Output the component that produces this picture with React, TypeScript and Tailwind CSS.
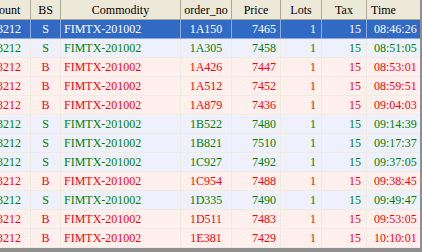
import React from 'react';

type Trade = {
  account: string;
  bs: 'B' | 'S';
  commodity: string;
  orderNo: string;
  price: number;
  lots: number;
  tax: number;
  time: string;
};

const trades: Trade[] = [
  { account: '0983212', bs: 'S', commodity: 'FIMTX-201002', orderNo: '1A150', price: 7465, lots: 1, tax: 15, time: '08:46:26' },
  { account: '0983212', bs: 'S', commodity: 'FIMTX-201002', orderNo: '1A305', price: 7458, lots: 1, tax: 15, time: '08:51:05' },
  { account: '0983212', bs: 'B', commodity: 'FIMTX-201002', orderNo: '1A426', price: 7447, lots: 1, tax: 15, time: '08:53:01' },
  { account: '0983212', bs: 'B', commodity: 'FIMTX-201002', orderNo: '1A512', price: 7452, lots: 1, tax: 15, time: '08:59:51' },
  { account: '0983212', bs: 'B', commodity: 'FIMTX-201002', orderNo: '1A879', price: 7436, lots: 1, tax: 15, time: '09:04:03' },
  { account: '0983212', bs: 'S', commodity: 'FIMTX-201002', orderNo: '1B522', price: 7480, lots: 1, tax: 15, time: '09:14:39' },
  { account: '0983212', bs: 'S', commodity: 'FIMTX-201002', orderNo: '1B821', price: 7510, lots: 1, tax: 15, time: '09:17:37' },
  { account: '0983212', bs: 'S', commodity: 'FIMTX-201002', orderNo: '1C927', price: 7492, lots: 1, tax: 15, time: '09:37:05' },
  { account: '0983212', bs: 'B', commodity: 'FIMTX-201002', orderNo: '1C954', price: 7488, lots: 1, tax: 15, time: '09:38:45' },
  { account: '0983212', bs: 'S', commodity: 'FIMTX-201002', orderNo: '1D335', price: 7490, lots: 1, tax: 15, time: '09:49:47' },
  { account: '0983212', bs: 'B', commodity: 'FIMTX-201002', orderNo: '1D511', price: 7483, lots: 1, tax: 15, time: '09:53:05' },
  { account: '0983212', bs: 'B', commodity: 'FIMTX-201002', orderNo: '1E381', price: 7429, lots: 1, tax: 15, time: '10:10:01' },
];

const headCell = 'flex h-full items-center justify-center border-r border-[#aca899]';

export default function App() {
  const selected = 0;

  return (
    <div className="w-[422px] h-[252px] bg-[#8f8f8f] overflow-hidden font-['Liberation_Serif',serif] text-[12px] leading-none">
      <div className="w-[420px] h-[248px] overflow-hidden bg-white">
        {/* grid is scrolled right by 30px */}
        <div className="-ml-[30px] w-[452px]">
          <div className="flex h-[20px] bg-[#ece9d8] border-b border-[#aca899] text-black">
            <div className={`${headCell} w-[61px]`}>Account</div>
            <div className={`${headCell} w-[30px]`}>BS</div>
            <div className={`${headCell} w-[120px]`}>Commodity</div>
            <div className={`${headCell} w-[51px]`}>order_no</div>
            <div className={`${headCell} w-[49px]`}>Price</div>
            <div className={`${headCell} w-[41px]`}>Lots</div>
            <div className={`${headCell} w-[45px]`}>Tax</div>
            <div className="flex h-full items-center w-[55px] pl-[4px]">Time</div>
          </div>

          {trades.map((t, i) => {
            const isSel = i === selected;
            const row = isSel
              ? 'bg-[#316ac5] text-white'
              : t.bs === 'S'
                ? 'bg-[#eff0fd] text-[#008000]'
                : 'bg-[#fff0ed] text-[#ff0000]';
            const line = isSel ? 'border-[#8fa9da]' : 'border-[#efebde]';
            const cell = `flex h-full items-center border-r ${line}`;
            return (
              <div key={t.orderNo} className={`flex h-[19px] border-b ${line} ${row}`}>
                <div className={`${cell} w-[61px] justify-center`}>{t.account}</div>
                <div className={`${cell} w-[30px] justify-center`}>{t.bs}</div>
                <div className={`${cell} w-[120px] pl-[3px]`}>{t.commodity}</div>
                <div className={`${cell} w-[51px] justify-center`}>{t.orderNo}</div>
                <div className={`${cell} w-[49px] justify-end pr-[4px]`}>{t.price}</div>
                <div className={`${cell} w-[41px] justify-end pr-[5px]`}>{t.lots}</div>
                <div className={`${cell} w-[45px] justify-end pr-[5px]`}>{t.tax}</div>
                <div className="flex h-full items-center w-[55px] pl-[7px]">{t.time}</div>
              </div>
            );
          })}
        </div>
      </div>
    </div>
  );
}
